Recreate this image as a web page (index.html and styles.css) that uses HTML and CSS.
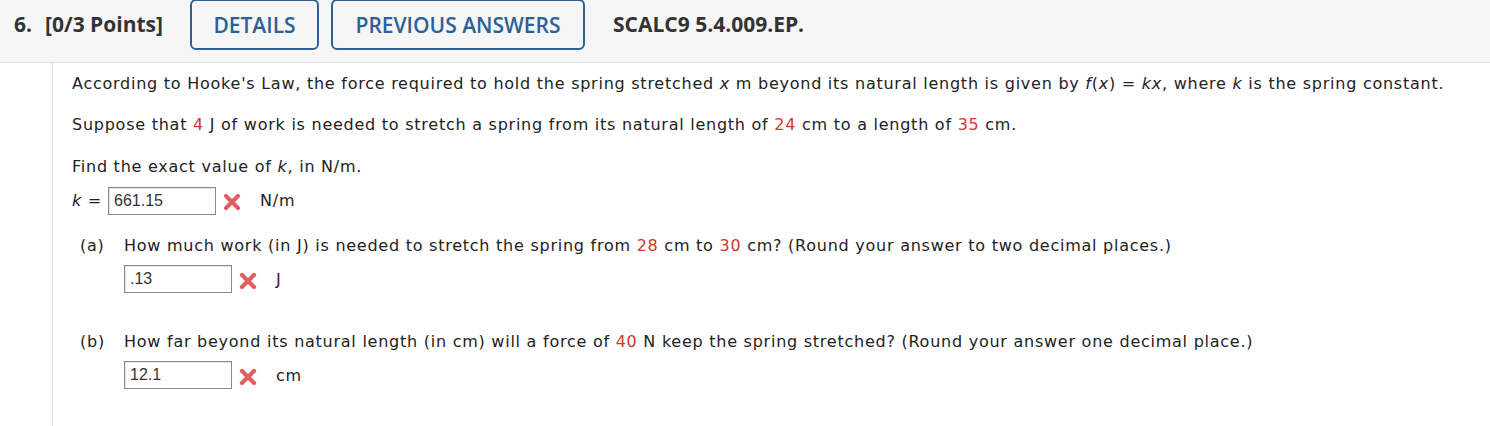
FILE: index.html
```html
<!DOCTYPE html>
<html>
<head>
<meta charset="utf-8">
<link rel="stylesheet" href="styles.css">
</head>
<body>
<div class="header">
  <div class="qnum">6.</div>
  <div class="points">[0/3 Points]</div>
  <div class="btn btn-details">DETAILS</div>
  <div class="btn btn-prev">PREVIOUS ANSWERS</div>
  <div class="code">SCALC9 5.4.009.EP.</div>
</div>
<div class="content">
  <p class="line l1">According to Hooke's Law, the force required to hold the spring stretched <i>x</i> m beyond its natural length is given by <i>f</i>(<i>x</i>) = <i>kx</i>, where <i>k</i> is the spring constant.</p>
  <p class="line l2">Suppose that <span class="red">4</span> J of work is needed to stretch a spring from its natural length of <span class="red">24</span> cm to a length of <span class="red">35</span> cm.</p>
  <p class="line l3">Find the exact value of <i>k</i>, in N/m.</p>
  <div class="answer k-row">
    <span class="klabel"><i>k</i> = </span>
    <span class="inp">661.15</span>
    <svg class="xmark" viewBox="0 0 20 20" width="20" height="20"><path d="M4 4 L16 16 M16 4 L4 16" stroke="#e0474c" stroke-width="4.2" stroke-linecap="round" opacity="0.88"/></svg>
    <span class="unit">N/m</span>
  </div>
  <div class="part pa">
    <div class="q"><span class="plabel">(a)</span><span>How much work (in J) is needed to stretch the spring from <span class="red">28</span> cm to <span class="red">30</span> cm? (Round your answer to two decimal places.)</span></div>
    <div class="answer sub">
      <span class="inp">.13</span>
      <svg class="xmark" viewBox="0 0 20 20" width="20" height="20"><path d="M4 4 L16 16 M16 4 L4 16" stroke="#e0474c" stroke-width="4.2" stroke-linecap="round" opacity="0.88"/></svg>
      <span class="unit">J</span>
    </div>
  </div>
  <div class="part pb">
    <div class="q"><span class="plabel">(b)</span><span>How far beyond its natural length (in cm) will a force of <span class="red">40</span> N keep the spring stretched? (Round your answer one decimal place.)</span></div>
    <div class="answer sub">
      <span class="inp">12.1</span>
      <svg class="xmark" viewBox="0 0 20 20" width="20" height="20"><path d="M4 4 L16 16 M16 4 L4 16" stroke="#e0474c" stroke-width="4.2" stroke-linecap="round" opacity="0.88"/></svg>
      <span class="unit">cm</span>
    </div>
  </div>
</div>
</body>
</html>
```
FILE: styles.css
```css
html, body {
  margin: 0;
  padding: 0;
  background: #fff;
}
body {
  width: 1490px;
  height: 426px;
  overflow: hidden;
  font-family: "DejaVu Sans", Verdana, sans-serif;
  color: #222;
}
.header {
  height: 62px;
  background: #f6f6f6;
  border-bottom: 1px solid #dcdcdc;
  display: flex;
  align-items: flex-start;
  font-family: "Open Sans", sans-serif;
  font-weight: 700;
  font-size: 21px;
  color: #333;
}
.qnum {
  margin-left: 14px;
  margin-top: 10px;
  line-height: 28px;
}
.points {
  margin-left: 13px;
  margin-top: 10px;
  line-height: 28px;
}
.btn {
  box-sizing: border-box;
  height: 51px;
  margin-top: -1px;
  border: 2px solid #2f6196;
  border-radius: 6px;
  color: #2b6198;
  font-weight: 600;
  font-size: 21px;
  display: flex;
  align-items: center;
  justify-content: center;
  background: #f6f6f6;
}
.btn-details {
  margin-left: 27px;
  width: 129px;
}
.btn-prev {
  margin-left: 12px;
  width: 254px;
}
.code {
  margin-left: 28px;
  margin-top: 10px;
  line-height: 28px;
}
.content {
  margin-left: 52px;
  border-left: 1px solid #dcdcdc;
  padding-left: 19px;
  height: 363px;
  font-size: 16px;
  letter-spacing: 0.75px;
  color: #222;
}
.line {
  margin: 0;
  line-height: 20px;
  white-space: nowrap;
}
.l1 { padding-top: 11px; }
.l2 { padding-top: 21px; }
.l3 { padding-top: 22px; }
.red { color: #d9342b; }
.answer {
  display: flex;
  align-items: center;
  white-space: nowrap;
}
.k-row {
  margin-top: 10px;
  height: 27px;
}
.klabel {
  margin-right: 6px;
}
.inp {
  box-sizing: border-box;
  width: 108px;
  height: 28px;
  border: 1px solid #8a8a8a;
  font-family: "Liberation Sans", Arial, sans-serif;
  font-size: 16px;
  letter-spacing: 0;
  color: #333;
  padding: 0 5px;
  line-height: 26px;
  box-shadow: inset 1px 1px 0 #e6e6e6;
}
.xmark {
  margin-left: 6px;
  margin-top: 3px;
}
.unit {
  margin-left: 18px;
}
.part {
  padding-left: 8px;
}
.pa { margin-top: 22px; }
.pb { margin-top: 39px; }
.q {
  display: flex;
  line-height: 20px;
  white-space: nowrap;
}
.plabel {
  width: 44px;
}
.sub {
  margin-top: 9px;
  margin-left: 44px;
  height: 28px;
}
.sub .unit { margin-left: 18px; }
```
